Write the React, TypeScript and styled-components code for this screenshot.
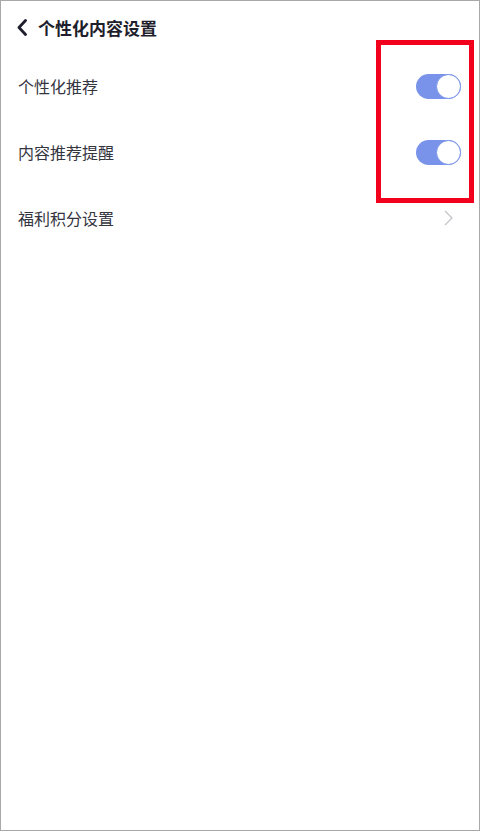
import React from 'react';
import styled, { createGlobalStyle } from 'styled-components';

const GlobalStyle = createGlobalStyle`
  html, body {
    margin: 0;
    padding: 0;
    background: #fff;
  }
  * {
    box-sizing: border-box;
  }
`;

const Screen = styled.div`
  position: relative;
  width: 480px;
  height: 831px;
  border: 1px solid #a8a8a8;
  background: #fff;
  font-family: "Noto Sans CJK SC", "Noto Sans", sans-serif;
  overflow: hidden;
`;

const TopBar = styled.div`
  display: flex;
  align-items: center;
  height: 52px;
  padding: 0 0 0 14px;
  gap: 9px;
`;

const BackButton = styled.button`
  display: flex;
  align-items: center;
  justify-content: center;
  width: 14px;
  height: 20px;
  padding: 0;
  border: none;
  background: none;
  color: #1e1e2c;
`;

const Title = styled.h1`
  margin: 0;
  font-size: 17px;
  font-weight: 700;
  color: #1e1e2c;
  letter-spacing: 0;
`;

const List = styled.div`
  display: flex;
  flex-direction: column;
`;

const Row = styled.div`
  display: flex;
  align-items: center;
  justify-content: space-between;
  height: 66px;
  padding: 0 18px 0 17px;
`;

const Label = styled.span`
  font-size: 16px;
  color: #35353f;
`;

const Track = styled.div<{ $on: boolean }>`
  position: relative;
  width: 45px;
  height: 25px;
  border-radius: 13px;
  background: ${(p) => (p.$on ? '#7893e9' : '#d8d8d8')};
`;

const Knob = styled.div<{ $on: boolean }>`
  position: absolute;
  top: 0;
  ${(p) => (p.$on ? 'right: 0;' : 'left: 0;')}
  width: 25px;
  height: 25px;
  border-radius: 50%;
  background: #fff;
  border: 1.5px solid #7893e9;
`;

const Arrow = styled.span`
  display: flex;
  align-items: center;
  margin-right: 8px;
  color: #c4c4c8;
`;

const Highlight = styled.div`
  position: absolute;
  left: 375px;
  top: 39px;
  width: 98px;
  height: 163px;
  border: 5px solid #f2001c;
  pointer-events: none;
`;

const Toggle: React.FC<{ on: boolean }> = ({ on }) => (
  <Track $on={on}>
    <Knob $on={on} />
  </Track>
);

const settings = [
  { label: '个性化推荐', type: 'toggle', on: true },
  { label: '内容推荐提醒', type: 'toggle', on: true },
  { label: '福利积分设置', type: 'link', on: false },
];

export default function App() {
  return (
    <>
      <GlobalStyle />
      <Screen>
        <TopBar>
          <BackButton>
            <svg width="12" height="17" viewBox="0 0 12 17" fill="none">
              <path d="M9.5 1.5 L3 8.5 L9.5 15.5" stroke="currentColor" strokeWidth="2.8" strokeLinecap="round" strokeLinejoin="round" />
            </svg>
          </BackButton>
          <Title>个性化内容设置</Title>
        </TopBar>
        <List>
          {settings.map((s) => (
            <Row key={s.label}>
              <Label>{s.label}</Label>
              {s.type === 'toggle' ? (
                <Toggle on={s.on} />
              ) : (
                <Arrow>
                  <svg width="9" height="16" viewBox="0 0 9 16" fill="none">
                    <path d="M1 1 L8 8 L1 15" stroke="currentColor" strokeWidth="1.3" strokeLinejoin="round" />
                  </svg>
                </Arrow>
              )}
            </Row>
          ))}
        </List>
        <Highlight />
      </Screen>
    </>
  );
}
